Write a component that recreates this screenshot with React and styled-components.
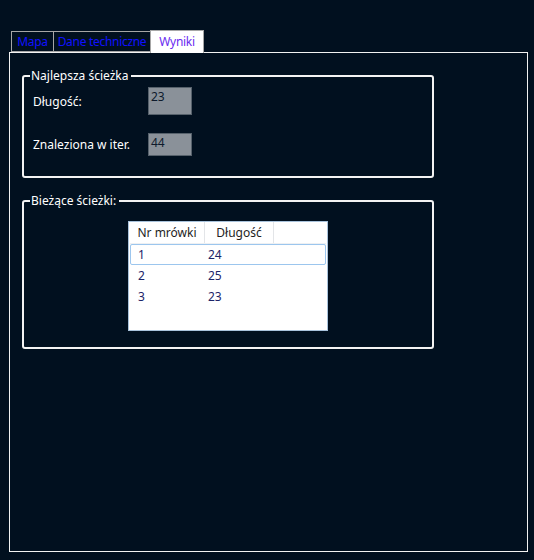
import styled, { createGlobalStyle } from "styled-components";

const GlobalStyle = createGlobalStyle`
  html, body {
    margin: 0;
    padding: 0;
    background: #01101f;
  }
  body {
    font-family: "Noto Sans", "Open Sans", sans-serif;
    font-size: 12px;
  }
`;

const Window = styled.div`
  width: 534px;
  height: 560px;
  background: #01101f;
  padding: 30px 0 0 9px;
  box-sizing: border-box;
`;

const TabStrip = styled.div`
  display: flex;
  align-items: flex-end;
  padding-left: 2px;
  position: relative;
  z-index: 1;
`;

const Tab = styled.div`
  box-sizing: border-box;
  width: ${(p) => p.$width}px;
  height: ${(p) => (p.$active ? "23px" : "21px")};
  margin-bottom: ${(p) => (p.$active ? "-1px" : "0")};
  display: flex;
  align-items: center;
  justify-content: center;
  border: 1px solid #a6a6a6;
  border-bottom: ${(p) => (p.$active ? "none" : "1px solid #a6a6a6")};
  margin-left: ${(p) => (p.$first ? "0" : "-1px")};
  background: ${(p) => (p.$active ? "#ffffff" : "transparent")};
  color: ${(p) => (p.$active ? "#6a2cf0" : "#1010ff")};
  letter-spacing: -0.3px;
  white-space: nowrap;
  line-height: 1;
`;

const Panel = styled.div`
  box-sizing: border-box;
  width: 519px;
  height: 500px;
  border: 1px solid #f2f2f2;
  padding: 15px 0 0 12px;
  display: flex;
  flex-direction: column;
  gap: 15px;
`;

const Group = styled.fieldset`
  box-sizing: border-box;
  width: 412px;
  height: ${(p) => p.$height}px;
  margin: 0;
  padding: 0;
  border: 2px solid #f3f3f3;
  border-radius: 3px;
`;

const Legend = styled.legend`
  margin-left: 6px;
  padding: 0 3px 0 1px;
  color: #ffffff;
  line-height: 16px;
`;

const FieldGrid = styled.div`
  display: grid;
  grid-template-columns: 115px 44px;
  grid-template-rows: 28px 23px;
  row-gap: 18px;
  padding: 3px 0 0 9px;
  align-items: center;
`;

const Label = styled.div`
  color: #ffffff;
`;

const ValueBox = styled.div`
  box-sizing: border-box;
  height: 100%;
  background: #8a9199;
  border: 1px solid #56616b;
  color: #0e1a2c;
  padding: 1px 2px;
  line-height: 16px;
`;

const ListView = styled.div`
  box-sizing: border-box;
  width: 200px;
  height: 110px;
  margin: 12px 0 0 104px;
  background: #ffffff;
  border: 1px solid #a9c3dc;
  padding: 0 1px;
`;

const HeaderRow = styled.div`
  display: flex;
  height: 21px;
  border-bottom: 1px solid #eef0f2;
  box-shadow: 0 1px 1px rgba(0, 0, 0, 0.04);
`;

const HeaderCell = styled.div`
  box-sizing: border-box;
  width: ${(p) => p.$width}px;
  border-right: 1px solid #e3e5e8;
  color: #1e1e1e;
  display: flex;
  align-items: center;
  justify-content: center;
`;

const Row = styled.div`
  display: flex;
  box-sizing: border-box;
  height: 21px;
  align-items: center;
  color: #1c2468;
  border: 1px solid ${(p) => (p.$focused ? "#9cc6ee" : "transparent")};
  border-radius: 2px;
`;

const Cell = styled.div`
  width: ${(p) => p.$width}px;
  padding-left: 7px;
  box-sizing: border-box;
`;

const rows = [
  { ant: "1", len: "24" },
  { ant: "2", len: "25" },
  { ant: "3", len: "23" },
];

export default function App() {
  return (
    <>
      <GlobalStyle />
      <Window>
        <TabStrip>
          <Tab $first $width={43}>Mapa</Tab>
          <Tab $width={98}>Dane techniczne</Tab>
          <Tab $active $width={54}>Wyniki</Tab>
        </TabStrip>
        <Panel>
          <Group $height={110}>
            <Legend>Najlepsza ścieżka</Legend>
            <FieldGrid>
              <Label>Długość:</Label>
              <ValueBox>23</ValueBox>
              <Label>Znaleziona w iter.</Label>
              <ValueBox>44</ValueBox>
            </FieldGrid>
          </Group>
          <Group $height={156}>
            <Legend>Bieżące ścieżki:</Legend>
            <ListView>
              <HeaderRow>
                <HeaderCell $width={75}>Nr mrówki</HeaderCell>
                <HeaderCell $width={69}>Długość</HeaderCell>
              </HeaderRow>
              {rows.map((r, i) => (
                <Row key={r.ant} $focused={i === 0}>
                  <Cell $width={70}>{r.ant}</Cell>
                  <Cell $width={70}>{r.len}</Cell>
                </Row>
              ))}
            </ListView>
          </Group>
        </Panel>
      </Window>
    </>
  );
}
